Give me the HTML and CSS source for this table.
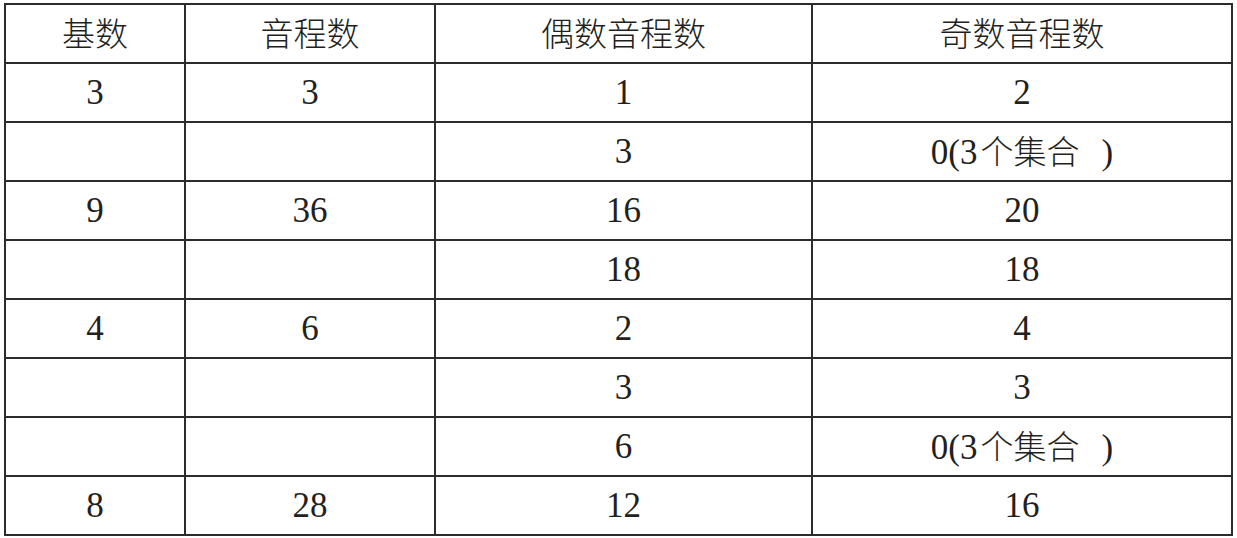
FILE: index.html
```html
<!DOCTYPE html>
<html lang="zh">
<head>
<meta charset="utf-8">
<title>音程数</title>
<link rel="stylesheet" href="styles.css">
</head>
<body>
<table class="grid">
  <thead>
    <tr>
      <th class="c1"><span class="cjk">基数</span></th>
      <th class="c2"><span class="cjk">音程数</span></th>
      <th class="c3"><span class="cjk">偶数音程数</span></th>
      <th class="c4"><span class="cjk">奇数音程数</span></th>
    </tr>
  </thead>
  <tbody>
    <tr><td>3</td><td>3</td><td>1</td><td>2</td></tr>
    <tr><td></td><td></td><td>3</td><td>0(3<span class="cjk">个集合</span><span class="rp">)</span></td></tr>
    <tr><td>9</td><td>36</td><td>16</td><td>20</td></tr>
    <tr><td></td><td></td><td>18</td><td>18</td></tr>
    <tr><td>4</td><td>6</td><td>2</td><td>4</td></tr>
    <tr><td></td><td></td><td>3</td><td>3</td></tr>
    <tr><td></td><td></td><td>6</td><td>0(3<span class="cjk">个集合</span><span class="rp">)</span></td></tr>
    <tr><td>8</td><td>28</td><td>12</td><td>16</td></tr>
  </tbody>
</table>
</body>
</html>
```

FILE: styles.css
```css
html, body {
  margin: 0;
  padding: 0;
  background: #ffffff;
}

.grid {
  margin: 3px 0 0 4px;
  width: 1229px;
  table-layout: fixed;
  border-collapse: separate;
  border-spacing: 2px;
  background: #2c2c2c;
  font-family: "Liberation Serif", "Times New Roman", serif;
  font-size: 35px;
  color: #231f20;
}

.grid th,
.grid td {
  background: #ffffff;
  height: 57px;
  padding: 0;
  text-align: center;
  vertical-align: middle;
  font-weight: normal;
  line-height: 1;
}

.c1 { width: 178px; }
.c2 { width: 248px; }
.c3 { width: 375px; }
.c4 { width: 418px; }

.cjk {
  font-family: "Noto Sans CJK SC", "Noto Sans CJK JP", sans-serif;
  font-size: 33px;
  font-weight: 300;
  margin-left: 3px;
}

th .cjk {
  margin-left: 0;
}

.rp {
  margin-left: 22px;
}
```
